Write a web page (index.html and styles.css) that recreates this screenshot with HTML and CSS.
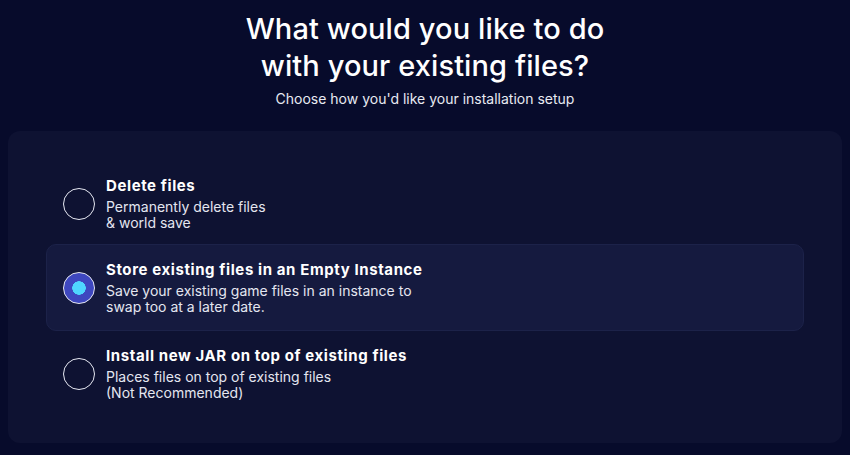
FILE: index.html
```html
<!DOCTYPE html>
<html lang="en">
  <head>
    <meta charset="UTF-8" />
    <meta name="viewport" content="width=device-width, initial-scale=1.0" />
    <title>Existing files</title>
    <link rel="stylesheet" href="styles.css">
  </head>
  <body>
    <header>
      <h1>What would you like to do<br />with your existing files?</h1>
      <p>Choose how you'd like your installation setup</p>
    </header>

    <main class="card">
      <label class="option">
        <span class="radio"></span>
        <span class="text">
          <strong>Delete files</strong>
          <span>Permanently delete files<br />&amp; world save</span>
        </span>
      </label>
      <label class="option selected">
        <span class="radio"></span>
        <span class="text">
          <strong>Store existing files in an Empty Instance</strong>
          <span>Save your existing game files in an instance to<br />swap too at a later date.</span>
        </span>
      </label>
      <label class="option">
        <span class="radio"></span>
        <span class="text">
          <strong>Install new JAR on top of existing files</strong>
          <span>Places files on top of existing files<br />(Not Recommended)</span>
        </span>
      </label>
    </main>
  </body>
</html>
```

FILE: styles.css
```css
html,
body {
  margin: 0;
  padding: 0;
}

body {
  height: 455px;
  overflow: hidden;
  background: #070b2b;
  color: #f2f3f8;
  font-family: Inter, Lato, sans-serif;
}

header {
  padding-top: 10px;
  text-align: center;
}

header h1 {
  margin: 0;
  font-size: 29px;
  line-height: 37px;
  font-weight: 500;
  letter-spacing: 0.1px;
  color: #fff;
}

header p {
  margin: 6px 0 0;
  font-size: 14px;
  line-height: 18px;
  color: #e8eaf2;
}

.card {
  display: flex;
  flex-direction: column;
  margin: 23px 8px 0;
  padding: 30px 38px 27px;
  height: 312px;
  box-sizing: border-box;
  background: #0e1232;
  border-radius: 12px;
}

.option {
  display: flex;
  align-items: center;
  gap: 11px;
  height: 85px;
  box-sizing: border-box;
  padding: 0 16px;
  border: 1px solid transparent;
  border-radius: 10px;
}

.option.selected {
  height: 87px;
  margin-top: -2px;
  background: #151a3f;
  border-color: #1c2249;
}

.radio {
  flex: none;
  width: 32px;
  height: 32px;
  box-sizing: border-box;
  border: 1.5px solid #e6e8f2;
  border-radius: 50%;
}

.selected .radio {
  background: radial-gradient(circle, #4fd6ff 0 6.5px, #3e47bf 7px);
}

.text {
  display: flex;
  flex-direction: column;
  gap: 4px;
}

.text strong {
  font-size: 15px;
  line-height: 18px;
  font-weight: 700;
  letter-spacing: 0.6px;
  color: #fff;
}

.text span {
  font-size: 14px;
  line-height: 16px;
  color: #e4e6f0;
}
```
